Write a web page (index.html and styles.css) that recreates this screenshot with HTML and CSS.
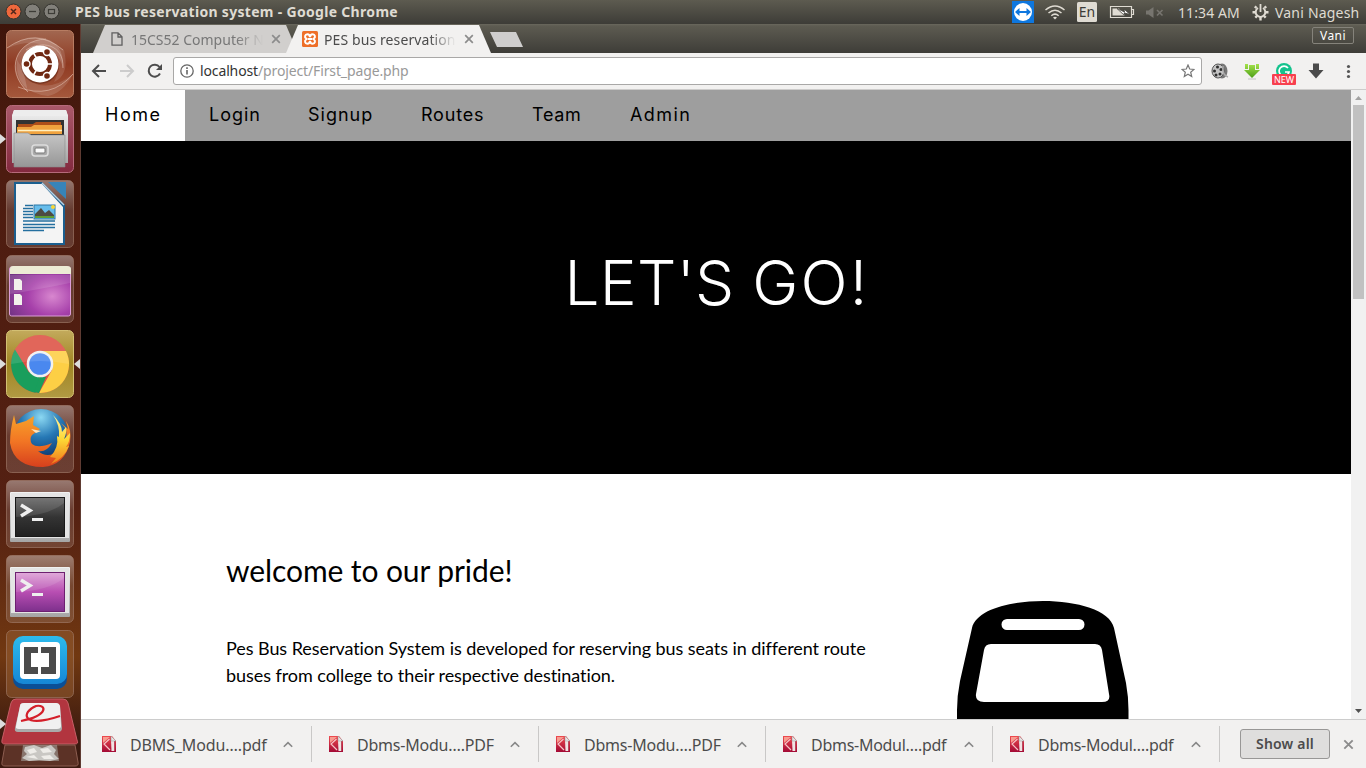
FILE: index.html
```
<!DOCTYPE html>
<html lang="en">
<head>
<meta charset="utf-8">
<title>PES bus reservation system</title>
<link rel="stylesheet" href="styles.css">
</head>
<body>
<svg width="0" height="0" class="defs">
  <defs>
    <linearGradient id="glass" x1="0" y1="0" x2="0" y2="1"><stop offset="0" stop-color="#fff" stop-opacity=".4"/><stop offset=".45" stop-color="#fff" stop-opacity=".13"/><stop offset="1" stop-color="#fff" stop-opacity=".14"/></linearGradient>
    <linearGradient id="metal" x1="0" y1="0" x2="0" y2="1"><stop offset="0" stop-color="#f2f2f2"/><stop offset="1" stop-color="#a5a5a5"/></linearGradient>
    <linearGradient id="drawer" x1="0" y1="0" x2="0" y2="1"><stop offset="0" stop-color="#c6c6c6"/><stop offset="1" stop-color="#969696"/></linearGradient>
    <linearGradient id="rust" x1="0" y1="0" x2="0" y2="1"><stop offset="0" stop-color="#a26750"/><stop offset=".5" stop-color="#8f3a22"/><stop offset="1" stop-color="#a5583c"/></linearGradient>
    <linearGradient id="rose" x1="0" y1="0" x2="0" y2="1"><stop offset="0" stop-color="#aa596a"/><stop offset="1" stop-color="#83293e"/></linearGradient>
    <linearGradient id="olive" x1="0" y1="0" x2="0" y2="1"><stop offset="0" stop-color="#c3aa5c"/><stop offset=".5" stop-color="#a08523"/><stop offset="1" stop-color="#b19a43"/></linearGradient>
    <radialGradient id="desk" cx=".7" cy=".6" r=".8"><stop offset="0" stop-color="#d887cf"/><stop offset=".5" stop-color="#a640aa"/><stop offset="1" stop-color="#713383"/></radialGradient>
    <linearGradient id="dark" x1="0" y1="0" x2="0" y2="1"><stop offset="0" stop-color="#666"/><stop offset=".5" stop-color="#343434"/><stop offset="1" stop-color="#202020"/></linearGradient>
    <linearGradient id="violet" x1="0" y1="0" x2="0" y2="1"><stop offset="0" stop-color="#dda0d6"/><stop offset=".5" stop-color="#b84eb2"/><stop offset="1" stop-color="#7d308c"/></linearGradient>
    <linearGradient id="blue" x1="0" y1="0" x2="0" y2="1"><stop offset="0" stop-color="#2dbbed"/><stop offset="1" stop-color="#1687d6"/></linearGradient>
    <radialGradient id="globe" cx=".5" cy=".15" r=".8"><stop offset="0" stop-color="#8bd8f2"/><stop offset=".45" stop-color="#2678b5"/><stop offset="1" stop-color="#092c62"/></radialGradient>
    <linearGradient id="fox" x1="0" y1="0" x2="0" y2="1"><stop offset="0" stop-color="#f7a32a"/><stop offset=".5" stop-color="#f27624"/><stop offset="1" stop-color="#d7401d"/></linearGradient>
    <linearGradient id="tail" x1="0" y1="0" x2="0" y2="1"><stop offset="0" stop-color="#fff4a0"/><stop offset=".5" stop-color="#fdd835"/><stop offset="1" stop-color="#ef7b1c"/></linearGradient>
    <linearGradient id="red" x1="0" y1="0" x2="0" y2="1"><stop offset="0" stop-color="#ef4b4f"/><stop offset="1" stop-color="#a30a35"/></linearGradient>
    <linearGradient id="green" x1="0" y1="0" x2="0" y2="1"><stop offset="0" stop-color="#a4e14b"/><stop offset="1" stop-color="#4c9f17"/></linearGradient>
    <symbol id="pdf" viewBox="0 0 14 16"><path d="M0 0H10L14 5V16H0Z" fill="url(#red)"/><path d="M1 1H8L1 7Z" fill="#f79c90"/><path d="M7.500 3L2 8L8 14" stroke="#f6c3c6" stroke-width="1.200" fill="none"/><path d="M9 4H12.500V15H9.500Z" fill="#efe3e3"/><path d="M12.500 5V15" stroke="#b94a5e"/><path d="M9 0L14 5H9Z" fill="#e4e4e4" stroke="#999" stroke-width=".5"/></symbol>
    <symbol id="chev" viewBox="0 0 10 7"><path d="M.8 5.800L5 1.600L9.200 5.800" fill="none" stroke="#888" stroke-width="1.600"/></symbol>
    <symbol id="close" viewBox="0 0 10 10"><path d="M1.200 1.200L8.800 8.800M8.800 1.200L1.200 8.800" stroke="#8c8c8c" stroke-width="1.700"/></symbol>
  </defs>
</svg>

<header class="panel">
  <svg class="winbtns" width="60" height="24" viewBox="0 0 60 24">
    <circle cx="13.500" cy="11.500" r="7.500" fill="#ee683c" stroke="#34332e"/><path d="M11 9L16 14M16 9L11 14" stroke="#50271b" stroke-width="1.500"/>
    <circle cx="32.500" cy="11.500" r="7.500" fill="#82807a" stroke="#34332e"/><path d="M29 11.500H36" stroke="#3d3c37" stroke-width="1.300"/>
    <circle cx="51.500" cy="11.500" r="7.500" fill="#82807a" stroke="#34332e"/><rect x="48.500" y="9.500" width="6" height="4" fill="none" stroke="#3d3c37" stroke-width="1.200"/>
  </svg>
  <span class="panel-title">PES bus reservation system - Google Chrome</span>
  <svg class="tray" width="172" height="24" viewBox="0 0 172 24">
    <rect x="0" y="1" width="22" height="22" fill="#0e77df"/><circle cx="11" cy="12" r="9" fill="#fff"/><path d="M3 12L7.500 8V11H14.500V8L19 12L14.500 16V13H7.500V16Z" fill="#0e77df"/>
    <g fill="none" stroke="#dfdbd2" stroke-width="1.500"><path d="M33.500 10Q43 2 52.500 10M36.500 13Q43 7.500 49.500 13M39.300 15.700Q43 12.500 46.700 15.700"/></g><path d="M41 17.500Q43 16 45 17.500L43 19.500Z" fill="#dfdbd2"/>
    <rect x="65" y="2" width="20" height="20" rx="1.500" fill="#dfdbd2"/>
    <path d="M98.500 6.500H119.500V17.500H98.500ZM120 9.500H121.500V14.500H120" fill="none" stroke="#dfdbd2" stroke-width="1.200"/><path d="M100.500 8.500H107L113 15.500H100.500Z" fill="#dfdbd2"/><path d="M105 8.500L112.500 12L112 9L118 14.500L112 12.800L112.500 15.500Z" fill="#fff" stroke="#45443e" stroke-width=".8"/>
    <path d="M134 10.500H136.500L141.500 7V18L136.500 14.500H134Z" fill="#77756f"/><path d="M145 10L150.500 15.500M150.500 10L145 15.500" stroke="#77756f" stroke-width="1.600"/>
    <text x="75" y="17" class="tray-lang">En</text>
  </svg>
  <span class="clock">11:34 AM</span>
  <svg class="gear" width="17" height="18" viewBox="0 0 17 18"><path d="M6 5A4.800 4.800 0 1 0 11 5" fill="none" stroke="#dfdbd2" stroke-width="2"/><path d="M4.500 5L2.800 3.300M12.500 5L14.200 3.300M5 13L3.300 14.700M12 13L13.700 14.700M.5 9.300H3.500M13.500 9.300H16.500M8.500 14V17.500" stroke="#dfdbd2" stroke-width="2.400"/><path d="M8.500 1V9" stroke="#dfdbd2" stroke-width="1.800"/></svg>
  <span class="session">Vani Nagesh</span>
</header>

<div class="desktop">
  <aside class="launcher">
    <div class="tile">
      <svg viewBox="0 0 68 68"><rect x=".5" y=".5" width="67" height="67" rx="5" fill="url(#rust)" stroke="#b77c62"/><path d="M22 62C-2 40 10 10 40 9Q58 14 57 38Q52 18 32 17Q12 25 18 44Z" fill="#fff" opacity=".17"/><path d="M11 30Q8 62 42 66Q57 63 67 44Q45 62 25 52Z" fill="#fff" opacity=".13"/><path d="M2 18Q30 -5 58 20Q64 45 48 52Q60 30 44 18Q25 8 2 18Z" fill="#fff" opacity=".12"/><g fill="none" stroke="#e7c8b9" stroke-opacity=".55"><path d="M22 62C-2 40 10 10 40 9M20 20C35 10 58 14 57 38M1 18Q30 -3 57 20M12 57Q45 70 67 44"/></g><circle cx="34" cy="35" r="19" fill="#391107" opacity=".35"/><circle cx="34" cy="34" r="18.500" fill="#fff"/><circle cx="34" cy="34" r="10" fill="none" stroke="#702812" stroke-width="4"/><path d="M34 34H47M34 34L27.500 23M34 34L27.500 45" stroke="#fff" stroke-width="1.500"/><circle cx="34" cy="34" r="7.500" fill="#fff"/><g fill="#702812" stroke="#fff" stroke-width="1.400"><circle cx="20.500" cy="34" r="3.500"/><circle cx="41" cy="22" r="3.500"/><circle cx="41" cy="46" r="3.500"/></g></svg>
    </div>
    <div class="tile running">
      <svg viewBox="0 0 68 68"><rect x=".5" y=".5" width="67" height="67" rx="5" fill="url(#rose)" stroke="#b66a7b"/><path d="M8 5H60L62 11V58H6V11Z" fill="url(#metal)"/><path d="M6 11L8 5H60L62 11" fill="#ededed"/><rect x="10" y="15" width="48" height="15" fill="#333"/><path d="M12 19H27L30 17H55V29H12Z" fill="#ad4e19"/><path d="M11 22H25L28 20H56V29H11Z" fill="#efa23e"/><path d="M12 25.500H56" stroke="#fff0c0" stroke-width="1.300"/><path d="M8 28H22L25 30H59V62H8Z" fill="url(#drawer)" stroke="#8b8b8b" stroke-width=".6"/><rect x="26" y="40" width="16" height="11" rx="3" fill="#aaa" stroke="#ddd" stroke-width="1.500"/><rect x="29" y="43" width="10" height="5" rx="1" fill="#fafafa" stroke="#777"/></svg>
    </div>
    <div class="tile">
      <svg viewBox="0 0 68 68"><rect x=".5" y=".5" width="67" height="67" rx="5" fill="url(#glass)" stroke="#a58070" stroke-opacity=".6"/><path d="M8 2H36L59 25V65H8Z" fill="#1b5f8f"/><path d="M10 4H36L57 27V63H10Z" fill="#f4f4f4"/><path d="M42 2H60V19Z" fill="#3784b9"/><path d="M36 3L58 25" stroke="#b9d2e2" stroke-width="1.500"/><g stroke="#246f9f" stroke-width="1.500"><path d="M19 25.500H27M17 28.500H27M17 31.500H27M17 34.500H27M17 37.500H27M17 41H49M17 44.500H49M17 47.500H49M17 50.500H38"/></g><rect x="28" y="25" width="21" height="14" fill="#67bdeb" stroke="#2c77a6"/><path d="M29 38V34L35 28L39 33L43 30L48 35V38Z" fill="#4d4b42"/><path d="M29 38V36H48V38Z" fill="#5d9d34"/><circle cx="47" cy="27" r="2" fill="#f9d535"/></svg>
    </div>
    <div class="tile">
      <svg viewBox="0 0 68 68"><rect x=".5" y=".5" width="67" height="67" rx="5" fill="url(#glass)" stroke="#a58070" stroke-opacity=".6"/><rect x="3.500" y="12" width="61" height="49" rx="2" fill="url(#desk)" stroke="#dc9dd8"/><path d="M4 14Q4 11 7 11H61Q65 11 65 14V19H4Z" fill="#ecebd5"/><path d="M4 20H64V28Q30 35 4 39Z" fill="#fff" opacity=".12"/><path d="M8 24H14L16 26V35H8ZM8 39H14L16 41V50H8Z" fill="#f2f1ec"/></svg>
    </div>
    <div class="tile running focused">
      <svg viewBox="0 0 68 68"><rect x=".5" y=".5" width="67" height="67" rx="5" fill="url(#olive)" stroke="#d3bf73"/><circle cx="34" cy="34" r="29" fill="#dd5144"/><path d="M9 19.500L22.700 42L34 47.500L29.500 62.700A29 29 0 0 1 9 19.500Z" fill="#199e5c"/><path d="M34 21H60A29 29 0 0 1 33 63L46 40Z" fill="#fdcf45"/><path d="M33 63L40 47H34L28 62Z" fill="#199e5c"/><circle cx="34" cy="34" r="13.300" fill="#f1f1f1"/><circle cx="34" cy="34" r="10.800" fill="#4a88ef"/><path d="M5 34A29 29 0 0 1 63 34Q34 28 5 34Z" fill="#fff" opacity=".12"/></svg>
    </div>
    <div class="tile">
      <svg viewBox="0 0 68 68"><rect x=".5" y=".5" width="67" height="67" rx="5" fill="url(#glass)" stroke="#a58070" stroke-opacity=".6"/><circle cx="35" cy="32" r="28" fill="url(#globe)"/><path d="M8 10L10 19L20 16L28 11L27 20L34 24L26 30Q23 34 26 39Q32 44 46 38Q40 48 32 46Q42 55 55 44Q62 36 60 24L55 18L62 24L60 16Q66 25 64 37Q59 60 37 62Q8 62 4 38Q4 25 8 10Z" fill="url(#fox)"/><path d="M47 10Q56 19 56 27L60 22Q61 28 58 34L64 28Q64 37 60 42L63 41Q58 54 45 59L50 53L44 52Q53 43 51 31L53 32Q54 20 47 10Z" fill="url(#tail)"/><path d="M25 24L35 26L30 28Z" fill="#ffe3ba"/></svg>
    </div>
    <div class="tile">
      <svg viewBox="0 0 68 68"><rect x=".5" y=".5" width="67" height="67" rx="5" fill="url(#glass)" stroke="#a58070" stroke-opacity=".6"/><rect x="4" y="12" width="60" height="50" rx="1" fill="url(#metal)"/><rect x="5" y="13" width="58" height="45" fill="#e4e4e4"/><rect x="9.500" y="17.500" width="49" height="39" fill="url(#dark)" stroke="#181818"/><path d="M15 25L24 30.500L15 36" stroke="#eee" stroke-width="3.500" fill="none"/><path d="M26 39.500H37" stroke="#eee" stroke-width="3"/><path d="M10 18H58V23Q42 36 10 37Z" fill="#fff" opacity=".1"/></svg>
    </div>
    <div class="tile">
      <svg viewBox="0 0 68 68"><rect x=".5" y=".5" width="67" height="67" rx="5" fill="url(#glass)" stroke="#a58070" stroke-opacity=".6"/><rect x="4" y="12" width="60" height="50" rx="1" fill="url(#metal)"/><rect x="5" y="13" width="58" height="45" fill="#e4e4e4"/><rect x="9.500" y="17.500" width="49" height="39" fill="url(#violet)" stroke="#6d1f70"/><path d="M15 25L24 30.500L15 36" stroke="#eee" stroke-width="3.500" fill="none"/><path d="M26 39.500H37" stroke="#eee" stroke-width="3"/><path d="M10 18H58V23Q42 36 10 37Z" fill="#fff" opacity=".1"/></svg>
    </div>
    <div class="tile">
      <svg viewBox="0 0 68 68"><rect x=".5" y=".5" width="67" height="67" rx="5" fill="#9a6236" fill-opacity=".5" stroke="#a58070" stroke-opacity=".6"/><rect x="7" y="8" width="54" height="51" rx="10" fill="#0b4f96"/><rect x="7" y="6" width="54" height="48" rx="10" fill="url(#blue)"/><rect x="14" y="12" width="40" height="37" rx="4" fill="#fff"/><path d="M18 17H32V23H25V37H32V44H18ZM50 17H35V23H43V37H35V44H50Z" fill="#4b4b4b"/></svg>
    </div>
    <div class="stack running">
      <svg viewBox="0 0 80 70"><path d="M16 1Q12 1 11 5L2 42Q1 46 5 46H75Q79 46 77 42L68 5Q67 1 63 1Z" fill="#b2353f" stroke="#c65e66"/><path d="M5 47H75L78 64Q79 68 75 68H5Q1 68 2 64Z" fill="#6b3d30" fill-opacity=".7" stroke="#8c5d50"/><path d="M20 8Q20 5 24 5H56Q59 5 60 8L62 30Q62 34 58 34H18Q14 34 15 30Z" fill="#aaa"/><path d="M20 8Q20 5 24 5H56Q59 5 60 8L61 28Q61 31 57 31H19Q15 31 16 28Z" fill="#f0f0f0"/><path d="M21 23C50 17 46 6 36 8C21 14 21 31 60 18" fill="none" stroke="#d41f2a" stroke-width="2.200"/><path d="M23 47H57L59 63H21Z" fill="#a3a09b" opacity=".6"/><path d="M25 49L34 47L42 50L51 47L56 52L54 56L59 61L50 63L39 62L29 63L22 60L27 56L24 53Z" fill="#c9c7c3"/><path d="M27 52L34 50L37 54L30 56ZM40 51L48 50L52 54L43 55ZM26 59L34 57L38 61ZM41 58L50 57L54 61L44 61Z" fill="#eeece8"/></svg>
    </div>
  </aside>

  <main class="window">
    <div class="tabstrip">
      <div class="tab">
        <svg class="fav doc" width="12" height="14" viewBox="0 0 12 14"><path d="M1 .8H7L11 4.800V13.200H1ZM7 .8V5H11" fill="none" stroke="#5f5f5f" stroke-width="1.300"/></svg>
        <span class="tab-title">15CS52 Computer N</span>
        <svg class="tab-x" width="10" height="10"><use href="#close"/></svg>
      </div>
      <div class="tab active">
        <svg class="fav" width="16" height="16" viewBox="0 0 16 16"><rect width="16" height="16" rx="1.500" fill="#ee6f28"/><path d="M8 6.200Q7.800 3.200 5.300 3.200A2.300 2.300 0 0 0 4.200 7.500V8.500A2.300 2.300 0 0 0 5.300 12.800Q7.800 12.800 8 9.800Q8.200 12.800 10.700 12.800A2.300 2.300 0 0 0 11.800 8.500V7.500A2.300 2.300 0 0 0 10.700 3.200Q8.200 3.200 8 6.200Z" fill="#ee6f28" stroke="#fff" stroke-width="2"/><path d="M5.500 8H10.500" stroke="#fff" stroke-width="1.800"/></svg>
        <span class="tab-title">PES bus reservation</span>
        <svg class="tab-x" width="10" height="10"><use href="#close"/></svg>
      </div>
      <div class="newtab"></div>
      <div class="profile">Vani</div>
    </div>

    <div class="toolbar">
      <svg width="92" height="36" viewBox="0 0 92 36"><g fill="none" stroke-width="2"><path d="M25 18H12M18 12L12 18L18 24" stroke="#4c4c4c"/><path d="M39 18H52M46 12L52 18L46 24" stroke="#ccc"/><path d="M78.500 14A6 6 0 1 0 79 20.500" stroke="#4c4c4c"/></g><path d="M81 11V17H75Z" fill="#4c4c4c"/></svg>
      <div class="omnibox">
        <svg width="14" height="14" viewBox="0 0 14 14"><circle cx="7" cy="7" r="6.200" fill="none" stroke="#666" stroke-width="1.300"/><path d="M7 6V10.500M7 3.300V4.900" stroke="#666" stroke-width="1.600"/></svg>
        <span class="url"><b>localhost</b>/project/First_page.php</span>
        <svg class="star" width="14" height="14" viewBox="0 0 14 14"><path d="M7 1L8.700 5L13 5.400L9.700 8.200L10.700 12.500L7 10.200L3.300 12.500L4.300 8.200L1 5.400L5.300 5Z" fill="none" stroke="#777" stroke-width="1.200"/></svg>
      </div>
      <svg class="exts" width="164" height="36" viewBox="1202 53 164 36">
        <ellipse cx="1222" cy="71" rx="5.500" ry="7.500" fill="#777"/><ellipse cx="1218" cy="71" rx="6" ry="7" fill="#c4c4c4" stroke="#555"/><g fill="#2e2e2e"><circle cx="1217.500" cy="67" r="1.500"/><circle cx="1221" cy="69.500" r="1.500"/><circle cx="1220" cy="74" r="1.500"/><circle cx="1216" cy="75" r="1.500"/><circle cx="1214.500" cy="71" r="1.500"/></g><path d="M1223 66Q1222 75 1228 77" fill="none" stroke="#aaa" stroke-width="1.500"/>
        <path d="M1249 65H1255V70H1260L1252 78L1244 70H1249ZM1245 64H1248V69H1245ZM1256 64H1259V69H1256Z" fill="url(#green)"/><path d="M1248 79H1256" stroke="#c4c4c4"/>
        <circle cx="1284" cy="71" r="8" fill="#14c38d"/><path d="M1288 68A5 5 0 1 0 1289 72H1285" fill="none" stroke="#fff" stroke-width="1.700"/><rect x="1272" y="74" width="24" height="11" rx="1" fill="#f7404e"/><text x="1284" y="83" class="badge">NEW</text>
        <path d="M1313 63.500H1319V70H1323.500L1316 78.500L1308.500 70H1313Z" fill="#4b4b4b"/>
        <g fill="#555"><circle cx="1348.500" cy="66.500" r="1.600"/><circle cx="1348.500" cy="71.500" r="1.600"/><circle cx="1348.500" cy="76.500" r="1.600"/></g>
      </svg>
    </div>

    <div class="view">
      <div class="page">
        <nav class="nav">
          <a class="home"><span>Home</span></a><a class="login"><span>Login</span></a><a class="signup"><span>Signup</span></a><a class="routes"><span>Routes</span></a><a class="team"><span>Team</span></a><a class="admin"><span>Admin</span></a>
        </nav>
        <div class="hero"><h1>LET'S <span>GO!</span></h1></div>
        <section class="intro">
          <div class="copy">
            <h2>welcome to our pride!</h2>
            <p>Pes Bus Reservation System is developed for reserving bus seats in different route buses from college to their respective destination.</p>
          </div>
          <svg class="bus" width="172" height="172" viewBox="0 0 172 172"><path fill-rule="evenodd" d="M15 27C19 9 52 0 86 0S153 9 157 27L169 82Q171.500 96 171.500 109V172H0V109Q0 95 3 80ZM50 18A5.500 5.500 0 0 0 50 29H122A5.500 5.500 0 0 0 122 18ZM34 43Q28 43 27 49L19 93Q18 101 27 101H145Q154 101 152 93L145 49Q144 43 138 43Z"/></svg>
        </section>
      </div>
      <div class="scrollbar">
        <svg width="15" height="15" viewBox="0 0 15 15"><path d="M4 10H11L7.500 6Z" fill="#a3a3a3"/></svg>
        <div class="thumb"></div>
        <svg width="15" height="15" viewBox="0 0 15 15"><path d="M4 5H11L7.500 9Z" fill="#505050"/></svg>
      </div>
    </div>

    <footer class="downloads">
      <div class="item"><svg width="14" height="16"><use href="#pdf"/></svg><span class="f1">DBMS_Modu….pdf</span><svg class="chev" width="10" height="7"><use href="#chev"/></svg></div>
      <div class="item"><svg width="14" height="16"><use href="#pdf"/></svg><span class="f2">Dbms-Modu….PDF</span><svg class="chev" width="10" height="7"><use href="#chev"/></svg></div>
      <div class="item"><svg width="14" height="16"><use href="#pdf"/></svg><span class="f2">Dbms-Modu….PDF</span><svg class="chev" width="10" height="7"><use href="#chev"/></svg></div>
      <div class="item"><svg width="14" height="16"><use href="#pdf"/></svg><span class="f3">Dbms-Modul….pdf</span><svg class="chev" width="10" height="7"><use href="#chev"/></svg></div>
      <div class="item"><svg width="14" height="16"><use href="#pdf"/></svg><span class="f3">Dbms-Modul….pdf</span><svg class="chev" width="10" height="7"><use href="#chev"/></svg></div>
      <button class="showall">Show all</button>
      <svg class="dl-x" width="11" height="11" viewBox="0 0 10 10"><use href="#close"/></svg>
    </footer>
  </main>
</div>
</body>
</html>
```
FILE: styles.css
```
* { box-sizing: border-box; }
body { margin: 0; width: 1366px; height: 768px; overflow: hidden; font-family: "Noto Sans", "Open Sans", sans-serif; display: flex; flex-direction: column; }
svg { display: block; flex: none; }
.defs { position: absolute; }

.panel { height: 24px; flex: none; display: flex; align-items: center; background: linear-gradient(#5d5b50, #3d3c37); color: #dfdbd2; white-space: nowrap; }
.panel-title { margin-left: 15px; width: 937px; font-size: 14px; font-weight: 700; line-height: 24px; letter-spacing: .31px; }
.tray-lang { font: 14px "Noto Sans", sans-serif; fill: #3c3b37; text-anchor: middle; }
.clock { width: 69px; margin-left: -6px; font-size: 14px; letter-spacing: .1px; }
.gear { margin-left: 5px; }
.session { margin-left: 6px; font-size: 14px; letter-spacing: .2px; }

.desktop { flex: 1; display: flex; min-height: 0; }
.launcher { width: 81px; flex: none; padding: 6px 0 0 6px; display: flex; flex-direction: column; gap: 7px; background: linear-gradient(#3e150b, #4d1c10 20%, #542012 65%, #713811 85%, #3b1a10 96%); border-right: 1px solid #5e3b32; }
.tile { position: relative; width: 68px; height: 68px; flex: none; }
.stack { position: relative; width: 80px; height: 70px; flex: none; margin: -7px 0 0 -6px; }
.running::before, .focused::after { content: ""; position: absolute; border: solid transparent; border-width: 5px 0 5px 6px; border-left-color: #ddd; left: -6px; top: 29px; }
.stack.running::before { left: 0; top: 21px; }
.focused::after { border-width: 5px 6px 5px 0; border-right-color: #ddd; left: auto; right: -6px; }

.window { flex: 1; min-width: 0; display: flex; flex-direction: column; background: #f2f1f0; }
.tabstrip { height: 29px; flex: none; display: flex; align-items: flex-end; padding-left: 12px; background: linear-gradient(#6a685d, #5d5b51 2px, #3e3d38); }
.tab { width: 205px; height: 28px; flex: none; padding-left: 18px; display: flex; align-items: center; background: #d1cfcd; color: #777; clip-path: polygon(0 100%, 12px 0, calc(100% - 12px) 0, 100% 100%); }
.tab.active { margin-left: -12px; padding-left: 16px; background: #f2f1f0; color: #4c4c4c; position: relative; }
.tab-title { width: 132px; margin-left: 8px; overflow: hidden; white-space: nowrap; font-size: 14px; mask-image: linear-gradient(90deg, #000 80%, transparent); }
.active .tab-title { margin-left: 6px; letter-spacing: .1px; }
.tab-x { margin-left: 8px; }
.newtab { width: 33px; height: 15px; margin: 0 0 6px -1px; background: #cfcecd; clip-path: polygon(0 0, 26px 0, 33px 15px, 7px 15px); }
.profile { width: 42px; height: 17px; margin: 0 12px 9px auto; border: 1px solid #85837b; border-radius: 2px; color: #fff; font-size: 12px; line-height: 15px; text-align: center; letter-spacing: .4px; }

.toolbar { height: 37px; flex: none; display: flex; border-bottom: 1px solid #cdcccb; }
.omnibox { width: 1029px; height: 28px; margin-top: 4px; padding: 0 6px; display: flex; align-items: center; border: 1px solid #a9a8a7; border-radius: 3px; background: #fff; }
.url { margin-left: 6px; margin-top: -2px; font-size: 14px; color: #999; letter-spacing: -.13px; }
.url b { font-weight: 400; color: #333; }
.star { margin-left: auto; }
.badge { font: 9px "Noto Sans", sans-serif; fill: #fff; text-anchor: middle; }

.view { height: 629px; flex: none; display: flex; }
.page { flex: 1; overflow: hidden; background: #fff; }
.nav { height: 51px; display: flex; background: #9e9e9e; font: 18px/50px Inter, sans-serif; }
.nav a { padding-left: 24px; white-space: nowrap; color: #000; }
.nav .home { width: 104px; background: #fff; letter-spacing: 1.5px; }
.login { width: 99px; letter-spacing: 1px; }
.signup { width: 113px; letter-spacing: 1px; }
.routes { width: 111px; letter-spacing: .8px; }
.team { width: 98px; letter-spacing: .7px; }
.admin { letter-spacing: 1.4px; }
.hero { height: 333px; padding-top: 94px; background: #000; }
.hero h1 { margin: 0; color: #fff; font: 300 62px/96px Inter, sans-serif; letter-spacing: .3px; text-align: center; }
.hero h1 span { letter-spacing: 2.200px; margin-right: -2px; }
.intro { width: 980px; margin: 0 auto; padding-top: 64px; display: flex; }
.copy { width: 653px; font-family: Lato, sans-serif; font-variant-ligatures: none; }
.copy h2 { margin: 10px 0 42px; font-size: 30px; line-height: 45px; font-weight: 400; letter-spacing: -.09px; }
.copy p { margin: 0; font-size: 18px; line-height: 27px; letter-spacing: -.06px; }
.bus { margin: 63px 0 0 78px; }
.scrollbar { width: 15px; background: #f1f1f1; display: flex; flex-direction: column; }
.thumb { width: 11px; height: 194px; margin: 0 2px auto; background: #c1c1c1; }

.downloads { height: 49px; flex: none; display: flex; align-items: center; padding-left: 4px; border-top: 1px solid #ccc; }
.item { width: 227px; height: 36px; padding: 0 18px 0 17px; display: flex; align-items: center; border-right: 1px solid #c9c8c7; color: #4c4c4c; font-size: 16px; white-space: nowrap; }
.item span { margin: 1px 0 0 14px; }
.f1 { letter-spacing: -.13px; }
.f2 { letter-spacing: -.22px; }
.f3 { letter-spacing: -.28px; }
.chev { margin-left: auto; }
.showall { width: 90px; height: 30px; margin: 0 13px 0 20px; padding: 0 0 2px; border: 1px solid #989796; border-radius: 3px; background: #dfdedd; color: #4c4c4c; font: 600 14px "Noto Sans", sans-serif; letter-spacing: .2px; }
```
